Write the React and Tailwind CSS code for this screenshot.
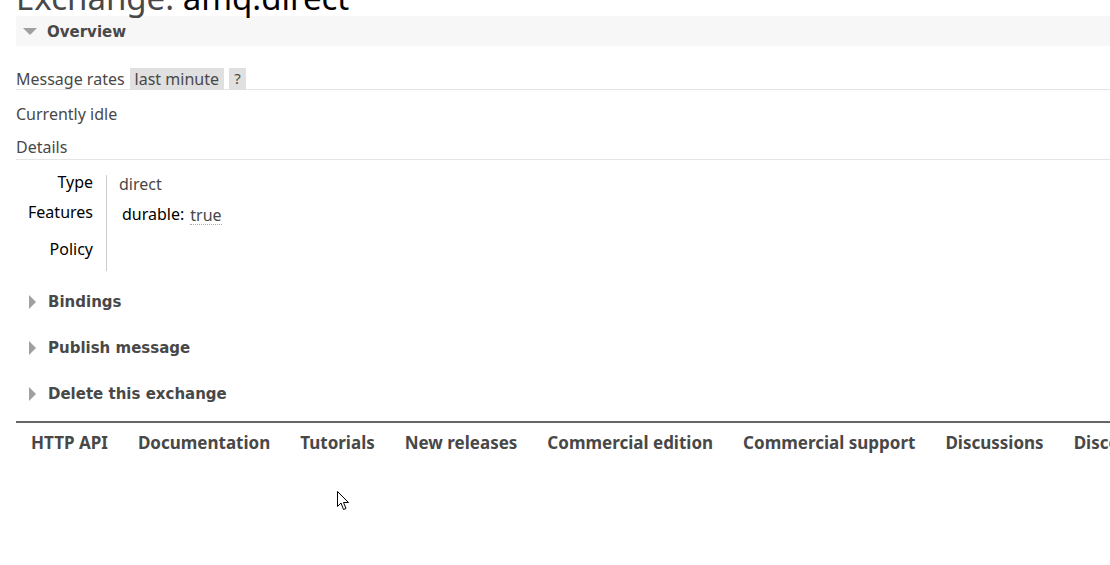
import React from 'react';

const body = { fontFamily: '"Noto Sans", "Open Sans", sans-serif' };
const heavy = { fontFamily: '"DejaVu Sans", Verdana, sans-serif' };

const Arrow = ({ open }) =>
  open ? (
    <svg width="14" height="8" viewBox="0 0 14 8" className="mr-[10px]">
      <path d="M0 0 L14 0 L7 7 Z" fill="#a0a0a0" />
    </svg>
  ) : (
    <svg width="8" height="14" viewBox="0 0 8 14" className="mr-[11px]">
      <path d="M0 0 L7 7 L0 14 Z" fill="#a0a0a0" />
    </svg>
  );

const Section = ({ title }) => (
  <div className="flex items-center h-[30px] pl-[13px] mb-[16px]">
    <Arrow />
    <span className="text-[15px] font-bold text-[#484848]" style={heavy}>{title}</span>
  </div>
);

const footerLinks = [
  'HTTP API', 'Documentation', 'Tutorials', 'New releases',
  'Commercial edition', 'Commercial support', 'Discussions', 'Discord', 'Plugins', 'GitHub',
];

export default function App() {
  return (
    <div className="w-[1110px] h-[565px] overflow-hidden bg-white text-[#484848] relative" style={body}>
      <div className="pl-[16px] w-[1300px]">
        {/* title, scrolled partly out of view */}
        <h1 className="text-[33px] leading-[36px] mt-[-20px] whitespace-nowrap">
          <span className="text-[#484848]">Exchange: </span>
          <span className="text-black">amq.direct</span>
        </h1>

        {/* overview */}
        <div className="flex items-center h-[30px] bg-[#f7f7f7] pl-[7px] pt-[2px]">
          <Arrow open />
          <span className="text-[15px] font-bold text-[#484848]" style={heavy}>Overview</span>
        </div>

        <div className="flex items-center gap-[5px] mt-[22px] h-[22px] border-b border-[#e4e4e4]">
          <span className="text-[16px]">Message rates</span>
          <span className="bg-[#e0e0e0] h-[22px] px-[5px] flex items-center text-[16px]">last minute</span>
          <span className="bg-[#e0e0e0] h-[22px] w-[17px] flex items-center justify-center text-[15px]">?</span>
        </div>

        <div className="text-[16px] mt-[14px] leading-[20px]">Currently idle</div>

        <div className="text-[16px] mt-[13px] leading-[20px] pb-[2px] border-b border-[#e4e4e4]">Details</div>

        <div className="flex mt-[15px] mb-[16px]">
          <div className="w-[77px] text-right text-black text-[16px] flex flex-col mt-[-2px]">
            <span className="leading-[18px]">Type</span>
            <span className="leading-[18px] mt-[12px]">Features</span>
            <span className="leading-[18px] mt-[19px]">Policy</span>
          </div>
          <div className="ml-[13px] border-l border-[#cccccc] h-[96px] pl-[12px] text-[16px]">
            <div className="leading-[18px]">direct</div>
            <div className="leading-[18px] mt-[12px] ml-[3px] flex items-end">
              <span className="text-black">durable:</span>
              <span className="ml-[6px] border-b border-dotted border-[#aaaaaa] leading-[18px] mb-[-2px]">true</span>
            </div>
          </div>
        </div>

        <Section title="Bindings" />
        <Section title="Publish message" />
        <Section title="Delete this exchange" />

        <div className="border-t-2 border-[#666666] mt-[-4px] flex gap-[30px] pl-[15px] pt-[10px] whitespace-nowrap">
          {footerLinks.map((l) => (
            <span key={l} className="text-[17px] font-bold text-[#484848] leading-[20px]">{l}</span>
          ))}
        </div>
      </div>

      {/* mouse pointer */}
      <svg className="absolute left-[337px] top-[491px]" width="13" height="20" viewBox="0 0 13 20">
        <path d="M0.5 0.5 L0.5 15.5 L4 12 L6.5 18.5 L9 17.5 L6.5 11.5 L11.5 11.5 Z" fill="#fff" stroke="#000" strokeWidth="1" />
      </svg>
    </div>
  );
}
